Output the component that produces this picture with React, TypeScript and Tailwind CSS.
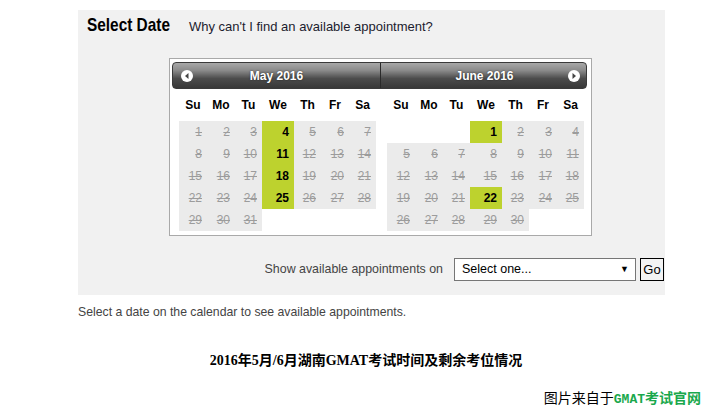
import React from 'react';

type Day = { n: number; open?: boolean } | null;

const DAY_NAMES = ['Su', 'Mo', 'Tu', 'We', 'Th', 'Fr', 'Sa'];

function buildMonth(firstDow: number, days: number, open: number[]): Day[] {
  const cells: Day[] = [];
  for (let i = 0; i < firstDow; i++) cells.push(null);
  for (let d = 1; d <= days; d++) cells.push({ n: d, open: open.includes(d) });
  while (cells.length % 7 !== 0) cells.push(null);
  return cells;
}

const may = buildMonth(0, 31, [4, 11, 18, 25]);
const june = buildMonth(3, 30, [1, 22]);

function Arrow({ dir }: { dir: 'left' | 'right' }) {
  return (
    <svg width="12" height="12" viewBox="0 0 12 12" className="shrink-0">
      <circle cx="6" cy="6" r="6" fill="#fff" />
      {dir === 'left' ? (
        <polygon points="7.5,3 4,6 7.5,9" fill="#444" />
      ) : (
        <polygon points="4.5,3 8,6 4.5,9" fill="#444" />
      )}
    </svg>
  );
}

function MonthGrid({ cells }: { cells: Day[] }) {
  return (
    <div className="grid grid-cols-[28px_28px_27px_32px_27px_28px_27px] w-[197px]">
      {DAY_NAMES.map((d) => (
        <div key={d} className="h-[32px] flex items-center justify-center text-[12px] font-bold text-black">
          {d}
        </div>
      ))}
      {cells.map((c, i) =>
        c === null ? (
          <div key={i} className="h-[22px]" />
        ) : c.open ? (
          <div key={i} className="h-[22px] bg-[#bdd22e] flex items-center justify-end pr-[5px] text-[12px] font-bold text-black">
            {c.n}
          </div>
        ) : (
          <div key={i} className="h-[22px] bg-[#ebebeb] flex items-center justify-end pr-[5px] text-[12px] text-[#9c9c9c] line-through">
            {c.n}
          </div>
        )
      )}
    </div>
  );
}

export default function App() {
  return (
    <div className="w-[725px] h-[415px] bg-white font-['Liberation_Sans',Arial,sans-serif] overflow-hidden">
      <div className="ml-[78px] mt-[10px] w-[587px] h-[285px] bg-[#f1f1f1]">
        <div className="flex items-baseline pl-[9px] pt-[3px]">
          <span className="w-[83px] shrink-0 whitespace-nowrap">
            <span className="inline-block origin-left scale-x-[0.81] text-[19px] leading-[24px] font-bold text-black">
              Select Date
            </span>
          </span>
          <span className="ml-[19px] text-[13px] text-[#1c1c2e]">Why can't I find an available appointment?</span>
        </div>

        <div className="ml-[91px] mt-[20px] w-[423px] border border-[#a9a9a9] bg-white pt-[3px] pl-[2px] pb-[4px]">
          <div className="flex w-[415px] h-[27px] rounded-[4px] border border-[#3a3a3a] bg-[linear-gradient(to_bottom,#a8a8a8_0%,#8a8a8a_30%,#4c4c4c_62%,#383838_100%)] text-white text-[12px] font-bold [text-shadow:0_0_2px_rgba(0,0,0,0.6)]">
            <div className="w-[207px] flex items-center pl-[8px]">
              <Arrow dir="left" />
              <span className="flex-1 text-center pr-[20px]">May 2016</span>
            </div>
            <div className="flex-1 flex items-center border-l border-[#2a2a2a] pr-[6px]">
              <span className="flex-1 text-center pl-[20px]">June 2016</span>
              <Arrow dir="right" />
            </div>
          </div>
          <div className="flex">
            <div className="w-[207px] pl-[7px]">
              <MonthGrid cells={may} />
            </div>
            <div className="pl-[8px]">
              <MonthGrid cells={june} />
            </div>
          </div>
        </div>

        <div className="mt-[22px] flex items-center justify-end pr-[1px]">
          <span className="text-[12.4px] text-[#444]">Show available appointments on</span>
          <div className="ml-[11px] w-[182px] h-[23px] border border-[#767676] bg-white flex items-center justify-between pl-[7px] pr-[6px] text-[12.5px] text-black">
            <span>Select one...</span>
            <span className="text-[9px]">▼</span>
          </div>
          <div className="ml-[4px] w-[24px] h-[23px] border border-black bg-[#f3f3f3] flex items-center justify-center text-[13px] text-black">
            Go
          </div>
        </div>
      </div>

      <p className="ml-[78px] mt-[9px] text-[12.25px] leading-[16px] text-[#444]">
        Select a date on the calendar to see available appointments.
      </p>

      <p className="mt-[31px] pl-[7px] text-center text-[14px] leading-[20px] font-bold text-black font-['Liberation_Serif','Noto_Sans_CJK_SC',serif]">
        2016年5月/6月湖南GMAT考试时间及剩余考位情况
      </p>

      <p className="mt-[16px] pr-[24px] text-right text-[14px] leading-[20px] text-black font-['Noto_Sans_CJK_SC',sans-serif]">
        图片来自于
        <span className="font-bold text-[#19a84c]">
          <span className="font-['Liberation_Mono',monospace] text-[13px]">GMAT</span>考试官网
        </span>
      </p>
    </div>
  );
}
